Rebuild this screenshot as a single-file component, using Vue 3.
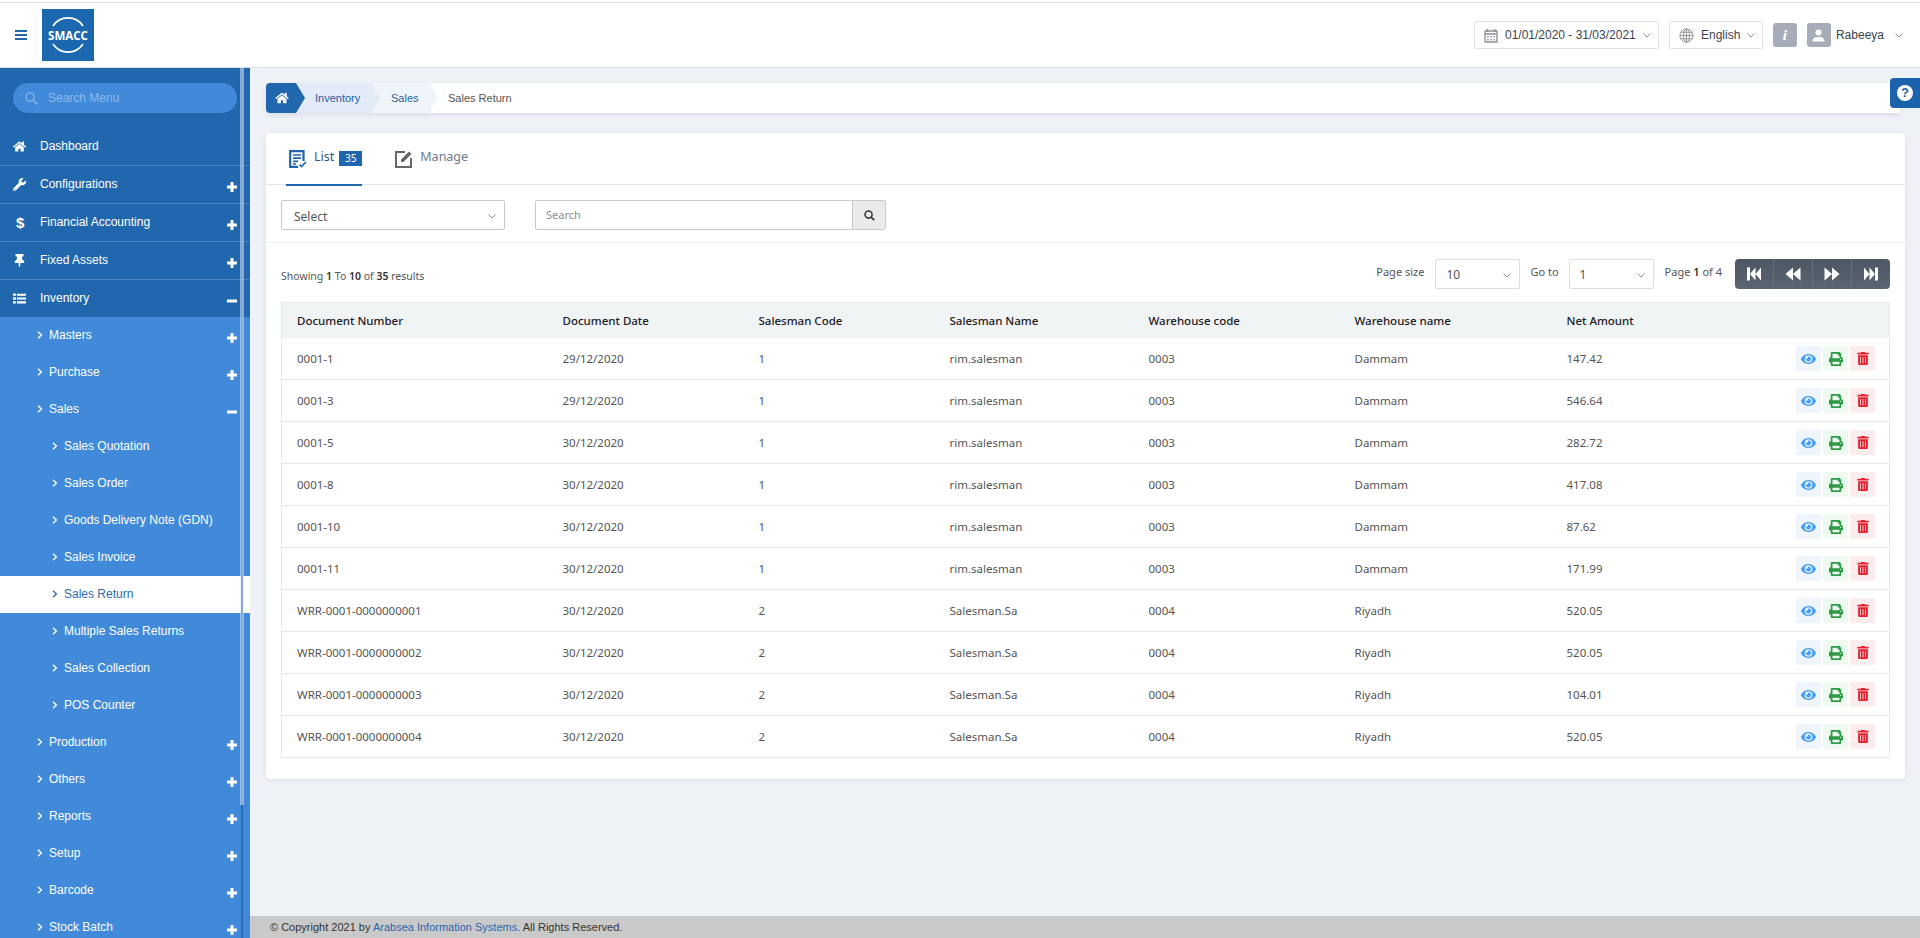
<script setup>
const icons = {
  home: { vb: '0 0 576 512', d: 'M280.37 148.26L96 300.11V464a16 16 0 0 0 16 16l112.06-.29a16 16 0 0 0 15.92-16V368a16 16 0 0 1 16-16h64a16 16 0 0 1 16 16v95.64a16 16 0 0 0 16 16.05L464 480a16 16 0 0 0 16-16V300L295.67 148.26a12.19 12.19 0 0 0-15.3 0zM571.6 251.47L488 182.56V44.05a12 12 0 0 0-12-12h-56a12 12 0 0 0-12 12v72.61L318.47 43a48 48 0 0 0-61 0L4.34 251.47a12 12 0 0 0-1.6 16.9l25.5 31A12 12 0 0 0 45.15 301l235.22-193.74a12.19 12.19 0 0 1 15.3 0L530.9 301a12 12 0 0 0 16.9-1.6l25.5-31a12 12 0 0 0-1.7-16.93z' },
  wrench: { vb: '0 0 512 512', d: 'M507.73 109.1c-2.24-9.03-13.54-12.09-20.12-5.51l-74.36 74.36-67.88-11.31-11.31-67.88 74.36-74.36c6.62-6.62 3.43-17.9-5.66-20.16-47.38-11.74-99.55.91-136.58 37.93-39.64 39.64-50.55 97.1-34.05 147.2L18.74 402.76c-24.99 24.99-24.99 65.51 0 90.5 24.99 24.99 65.51 24.99 90.5 0l213.21-213.21c50.12 16.71 107.47 5.68 147.37-34.22 37.07-37.07 49.7-89.32 37.91-136.73zM64 472c-13.25 0-24-10.75-24-24 0-13.26 10.75-24 24-24s24 10.74 24 24c0 13.25-10.75 24-24 24z' },
  pin: { vb: '0 0 384 512', d: 'M298.028 214.267L285.793 96H328c13.255 0 24-10.745 24-24V24c0-13.255-10.745-24-24-24H56C42.745 0 32 10.745 32 24v48c0 13.255 10.745 24 24 24h42.207L85.972 214.267C37.465 236.82 0 277.261 0 328c0 13.255 10.745 24 24 24h136v104.007c0 1.242.289 2.467.845 3.578l24 48c2.941 5.882 11.364 5.893 14.311 0l24-48a8.008 8.008 0 0 0 .845-3.578V352h136c13.255 0 24-10.745 24-24-.001-51.183-37.983-91.42-85.973-113.733z' },
  list: { vb: '0 0 512 512', d: 'M0 56h112v96H0zM152 64h360v80H152zM0 208h112v96H0zM152 216h360v80H152zM0 360h112v96H0zM152 368h360v80H152z' },
  eye: { vb: '0 0 576 512', d: 'M572.52 241.4C518.29 135.59 410.93 64 288 64S57.68 135.64 3.48 241.41a32.35 32.35 0 0 0 0 29.19C57.71 376.41 165.07 448 288 448s230.32-71.64 284.52-177.41a32.35 32.35 0 0 0 0-29.19zM288 400a144 144 0 1 1 144-144 143.93 143.93 0 0 1-144 144zm0-240a95.31 95.31 0 0 0-25.31 3.79 47.85 47.85 0 0 1-66.9 66.9A95.78 95.78 0 1 0 288 160z' },
  print: { vb: '0 0 512 512', d: 'M448 192V77.25c0-8.49-3.37-16.62-9.37-22.63L393.37 9.37c-6-6-14.14-9.37-22.63-9.37H96C78.33 0 64 14.33 64 32v160c-35.35 0-64 28.65-64 64v112c0 8.84 7.16 16 16 16h48v96c0 17.67 14.33 32 32 32h320c17.67 0 32-14.33 32-32v-96h48c8.84 0 16-7.16 16-16V256c0-35.35-28.65-64-64-64zm-64 256H128v-96h256v96zm0-224H128V64h192v48c0 8.84 7.16 16 16 16h48v96zm48 72c-13.25 0-24-10.75-24-24 0-13.26 10.75-24 24-24s24 10.74 24 24c0 13.25-10.75 24-24 24z' },
  trash: { vb: '0 0 448 512', d: 'M32 464a48 48 0 0 0 48 48h288a48 48 0 0 0 48-48V128H32zm272-256a16 16 0 0 1 32 0v224a16 16 0 0 1-32 0zm-96 0a16 16 0 0 1 32 0v224a16 16 0 0 1-32 0zm-96 0a16 16 0 0 1 32 0v224a16 16 0 0 1-32 0zM432 32H312l-9.4-18.7A24 24 0 0 0 281.1 0H166.8a23.72 23.72 0 0 0-21.4 13.3L136 32H16A16 16 0 0 0 0 48v32a16 16 0 0 0 16 16h416a16 16 0 0 0 16-16V48a16 16 0 0 0-16-16z' },
}

const topMenu = [
  { label: 'Dashboard', icon: 'home' },
  { label: 'Configurations', icon: 'wrench', sign: '+' },
  { label: 'Financial Accounting', glyph: '$', sign: '+' },
  { label: 'Fixed Assets', icon: 'pin', sign: '+' },
  { label: 'Inventory', icon: 'list', sign: '-' },
]
const subMenu = [
  { label: 'Masters', level: 1, sign: '+' },
  { label: 'Purchase', level: 1, sign: '+' },
  { label: 'Sales', level: 1, sign: '-' },
  { label: 'Sales Quotation', level: 2 },
  { label: 'Sales Order', level: 2 },
  { label: 'Goods Delivery Note (GDN)', level: 2 },
  { label: 'Sales Invoice', level: 2 },
  { label: 'Sales Return', level: 2, active: true },
  { label: 'Multiple Sales Returns', level: 2 },
  { label: 'Sales Collection', level: 2 },
  { label: 'POS Counter', level: 2 },
  { label: 'Production', level: 1, sign: '+' },
  { label: 'Others', level: 1, sign: '+' },
  { label: 'Reports', level: 1, sign: '+' },
  { label: 'Setup', level: 1, sign: '+' },
  { label: 'Barcode', level: 1, sign: '+' },
  { label: 'Stock Batch', level: 1, sign: '+' },
]
const columns = ['Document Number', 'Document Date', 'Salesman Code', 'Salesman Name', 'Warehouse code', 'Warehouse name', 'Net Amount']
const dam = ['1', 'rim.salesman', '0003', 'Dammam']
const riy = ['2', 'Salesman.Sa', '0004', 'Riyadh']
const rows = [
  ['0001-1', '29/12/2020', ...dam, '147.42'],
  ['0001-3', '29/12/2020', ...dam, '546.64'],
  ['0001-5', '30/12/2020', ...dam, '282.72'],
  ['0001-8', '30/12/2020', ...dam, '417.08'],
  ['0001-10', '30/12/2020', ...dam, '87.62'],
  ['0001-11', '30/12/2020', ...dam, '171.99'],
  ['WRR-0001-0000000001', '30/12/2020', ...riy, '520.05'],
  ['WRR-0001-0000000002', '30/12/2020', ...riy, '520.05'],
  ['WRR-0001-0000000003', '30/12/2020', ...riy, '104.01'],
  ['WRR-0001-0000000004', '30/12/2020', ...riy, '520.05'],
]
const pager = [
  'M2 2.500h3v13H2zM5 9l5.500-6.500v13zM10.500 9l5.500-6.500v13z',
  'M1.500 9l7.500-6.500v13zM9 9l7.500-6.500v13z',
  'M1.500 2.500L9 9l-7.500 6.500zM9 2.500L16.500 9 9 15.500z',
  'M2 2.500L7.500 9 2 15.500zM7.500 2.500L13 9l-5.500 6.500zM13 2.500h3v13h-3z',
]
</script>

<template>
  <div class="page">
    <header class="topbar">
      <div class="brand">
        <svg class="burger" viewBox="0 0 12 10" width="12" height="10"><path d="M0 0h12v2H0zM0 4h12v2H0zM0 8h12v2H0z" fill="#1f66ae" /></svg>
        <div class="logo">
          <svg viewBox="0 0 52 52" width="52" height="52" class="logo-arcs">
            <path d="M11 17A18 18 0 0 1 41 17M11 35A18 18 0 0 0 41 35" fill="none" stroke="#fff" stroke-width="1.700" />
          </svg>
          <span>SMACC</span>
        </div>
      </div>
      <div class="tools">
        <div class="tool date">
          <svg class="fixed" viewBox="0 0 14 15" width="14" height="15"><path d="M1 3h12v11H1zM1 6h12" fill="none" stroke="#8b8f96" stroke-width="1.300" /><path d="M3.500 1v3M10.500 1v3" stroke="#8b8f96" stroke-width="1.500" /><path d="M3 8h2v1.500H3zM6 8h2v1.500H6zM9 8h2v1.500H9zM3 11h2v1.500H3zM6 11h2v1.500H6zM9 11h2v1.500H9z" fill="#a5a9af" /></svg>
          <span class="nowrap">01/01/2020 - 31/03/2021</span>
          <svg class="chev" viewBox="0 0 8 5" width="8" height="5"><path d="M.5.5L4 4 7.500.5" fill="none" stroke="#8b8f96" /></svg>
        </div>
        <div class="tool lang">
          <svg class="fixed" viewBox="0 0 16 16" width="15" height="15"><g fill="none" stroke="#8f9399" stroke-width="1"><circle cx="8" cy="8" r="7" /><ellipse cx="8" cy="8" rx="3.200" ry="7" /><path d="M8 1v14M1 8h14M2 4.500h12M2 11.500h12" /></g></svg>
          <span>English</span>
          <svg class="chev" viewBox="0 0 8 5" width="8" height="5"><path d="M.5.5L4 4 7.500.5" fill="none" stroke="#8b8f96" /></svg>
        </div>
        <div class="square info">i</div>
        <div class="square">
          <svg viewBox="0 0 14 14" width="13" height="13"><circle cx="7" cy="3.800" r="3.300" fill="#fff" /><path d="M0.500 13.500c0-3.800 2.500-5 6.500-5s6.500 1.200 6.500 5z" fill="#fff" /></svg>
        </div>
        <span class="username">Rabeeya</span>
        <svg class="chev user-chev" viewBox="0 0 8 5" width="8" height="5"><path d="M.5.5L4 4 7.500.5" fill="none" stroke="#8b8f96" /></svg>
      </div>
    </header>

    <div class="body">
      <aside class="sidebar">
        <div class="search-wrap">
          <div class="menu-search">
            <svg viewBox="0 0 14 14" width="13" height="13"><circle cx="5.500" cy="5.500" r="4.500" fill="none" stroke="#8db9ea" stroke-width="1.300" /><path d="M9 9l4.500 4.500" stroke="#8db9ea" stroke-width="1.500" /></svg>
            <span>Search Menu</span>
          </div>
        </div>
        <ul class="top-menu">
          <li v-for="item in topMenu" :key="item.label" class="top-item">
            <span class="top-icon">
              <svg v-if="item.icon" :viewBox="icons[item.icon].vb" width="13" height="13"><path :d="icons[item.icon].d" fill="#fff" /></svg>
              <b v-else>{{ item.glyph }}</b>
            </span>
            <span>{{ item.label }}</span>
            <svg v-if="item.sign" class="sign" viewBox="0 0 10 10" width="10" height="10">
              <path :d="item.sign === '+' ? 'M3.500 0h3v3.500H10v3H6.500V10h-3V6.500H0v-3h3.500z' : 'M0 3.500h10v3H0z'" fill="#fff" />
            </svg>
          </li>
        </ul>
        <ul class="sub-menu">
          <li v-for="item in subMenu" :key="item.label" class="sub-item" :class="['lvl' + item.level, { active: item.active }]">
            <svg class="caret" viewBox="0 0 6 8" width="6" height="8"><path d="M1 .8L4.400 4 1 7.200" fill="none" stroke="currentColor" stroke-width="1.300" /></svg>
            <span>{{ item.label }}</span>
            <svg v-if="item.sign" class="sign" viewBox="0 0 10 10" width="10" height="10">
              <path :d="item.sign === '+' ? 'M3.500 0h3v3.500H10v3H6.500V10h-3V6.500H0v-3h3.500z' : 'M0 3.500h10v3H0z'" fill="#fff" />
            </svg>
          </li>
        </ul>
        <div class="track"></div>
        <div class="thumb"></div>
      </aside>

      <main class="main">
        <div class="content">
          <nav class="crumbs">
            <div class="crumb c0"><svg :viewBox="icons.home.vb" width="14" height="12"><path :d="icons.home.d" fill="#fff" /></svg></div>
            <div class="crumb c1">Inventory</div>
            <div class="crumb c2">Sales</div>
            <div class="crumb c3">Sales Return</div>
          </nav>

          <section class="card">
            <div class="tabs">
              <div class="tab on">
                <svg viewBox="0 0 18 18" width="18" height="18">
                  <path d="M14.500 11V1.200H1.200v15.600h8" fill="none" stroke="#1f66ae" stroke-width="2.200" />
                  <path d="M4 5h8M4 8.200h8M4 11.400h5M4 14h3" stroke="#1f66ae" stroke-width="1.700" />
                  <path d="M10.500 14.500l2 2 4.500-4.500" fill="none" stroke="#1f66ae" stroke-width="1.700" />
                </svg>
                <span>List</span>
                <em>35</em>
              </div>
              <div class="tab">
                <svg viewBox="0 0 18 18" width="18" height="18">
                  <path d="M10 2H1v15h15V8" fill="none" stroke="#666" stroke-width="2" />
                  <path d="M6 9.500L14 1.500l2.500 2.500-8 8H6z" fill="#666" />
                </svg>
                <span>Manage</span>
              </div>
            </div>

            <div class="filters">
              <div class="select wide"><span>Select</span><svg class="chev" viewBox="0 0 8 5" width="8" height="5"><path d="M.5.5L4 4 7.500.5" fill="none" stroke="#8b8f96" /></svg></div>
              <div class="search-group">
                <div class="search-input">Search</div>
                <div class="search-btn"><svg viewBox="0 0 14 14" width="11" height="11"><circle cx="5.800" cy="5.800" r="4.500" fill="none" stroke="#333" stroke-width="2" /><path d="M9 9l4 4" stroke="#333" stroke-width="2.200" /></svg></div>
              </div>
            </div>

            <div class="list-body">
              <div class="list-tools">
                <div class="showing">Showing <b>1</b> To <b>10</b> of <b>35</b> results</div>
                <div class="paging">
                  <span>Page size</span>
                  <div class="select small"><span>10</span><svg class="chev" viewBox="0 0 8 5" width="8" height="5"><path d="M.5.5L4 4 7.500.5" fill="none" stroke="#8b8f96" /></svg></div>
                  <span class="goto">Go to</span>
                  <div class="select small"><span>1</span><svg class="chev" viewBox="0 0 8 5" width="8" height="5"><path d="M.5.5L4 4 7.500.5" fill="none" stroke="#8b8f96" /></svg></div>
                  <span class="of">Page <b>1</b> of 4</span>
                  <div class="pager">
                    <div v-for="(d, i) in pager" :key="i" class="pg"><svg viewBox="0 0 18 18" width="18" height="18"><path :d="d" fill="#fff" /></svg></div>
                  </div>
                </div>
              </div>

              <table class="grid">
                <thead>
                  <tr>
                    <th v-for="c in columns" :key="c">{{ c }}</th>
                    <th></th>
                  </tr>
                </thead>
                <tbody>
                  <tr v-for="r in rows" :key="r[0]">
                    <td v-for="(v, i) in r" :key="i">{{ v }}</td>
                    <td class="acts">
                      <div class="act-row">
                        <span class="act view"><svg :viewBox="icons.eye.vb" width="15" height="14"><path :d="icons.eye.d" fill="#4a9df5" /></svg></span>
                        <span class="act prt"><svg :viewBox="icons.print.vb" width="14" height="14"><path :d="icons.print.d" fill="#2e9a47" /></svg></span>
                        <span class="act del"><svg :viewBox="icons.trash.vb" width="12" height="13"><path :d="icons.trash.d" fill="#e6202f" /></svg></span>
                      </div>
                    </td>
                  </tr>
                </tbody>
              </table>
            </div>
          </section>
        </div>
        <footer class="foot">© Copyright 2021 by <a>Arabsea Information Systems.</a> All Rights Reserved.</footer>
        <div class="help"><svg viewBox="0 0 16 16" width="16" height="16"><circle cx="8" cy="8" r="8" fill="#fff" /></svg><b>?</b></div>
      </main>
    </div>
  </div>
</template>

<style>
html, body { margin: 0; height: 100%; overflow: hidden; background: #eef1f6; }
</style>

<style scoped>
.page { width: 1920px; height: 938px; display: flex; flex-direction: column; overflow: hidden; font-family: "Noto Sans", sans-serif; color: #444; }
ul { list-style: none; margin: 0; padding: 0; }
.nowrap { white-space: nowrap; }
.fixed { flex: none; display: block; }
.topbar { height: 68px; box-sizing: border-box; background: #fff; border-bottom: 1px solid #dde0e6; display: flex; justify-content: space-between; align-items: center; padding: 3px 0 0; flex: none; position: relative; }
.topbar::before { content: ""; position: absolute; left: 0; right: 0; top: 2px; height: 1px; background: #dcdfe3; }
.brand { display: flex; align-items: center; gap: 15px; padding-left: 15px; }
.burger { display: block; }
.logo { width: 52px; height: 52px; background: #1b68b1; position: relative; display: flex; align-items: center; justify-content: center; color: #fff; font: 700 11.500px "Open Sans", sans-serif; }
.logo span { position: relative; }
.logo-arcs { position: absolute; left: 0; top: 0; }
.tools { display: flex; align-items: center; font: 12px "Liberation Sans", sans-serif; color: #3c4450; padding-right: 17px; }
.tool { height: 28px; box-sizing: border-box; border: 1px solid #dfe1e5; border-radius: 2px; display: flex; align-items: center; }
.date { width: 185px; padding-left: 9px; gap: 7px; margin-right: 10px; }
.lang { width: 94px; padding-left: 9px; gap: 7px; margin-right: 10px; }
.chev { flex: none; display: block; }
.date .chev, .lang .chev { margin-left: auto; margin-right: 9px; }
.square { width: 24px; height: 24px; border-radius: 3px; background: #a7adb8; display: flex; align-items: center; justify-content: center; }
.info { margin-right: 10px; color: #fff; font: italic 700 15px "Liberation Serif", serif; }
.username { margin-left: 5px; font-size: 12px; }
.user-chev { margin-left: 11px; }

.body { flex: 1; display: flex; min-height: 0; }
.sidebar { width: 250px; flex: none; background: #418ada; position: relative; overflow: hidden; font: 12px "Liberation Sans", sans-serif; color: #fff; display: flex; flex-direction: column; }
.search-wrap { background: #2167ae; padding: 15px 13px 15px; }
.menu-search { height: 30px; width: 224px; border-radius: 15px; background: #418ada; display: flex; align-items: center; padding-left: 12px; box-sizing: border-box; gap: 10px; color: #8db9ea; }
.top-menu { background: #2167ae; }
.top-item { height: 38px; box-sizing: border-box; border-bottom: 1px solid #4d86c2; display: flex; align-items: center; position: relative; padding-left: 13px; padding-bottom: 1px; }
.top-item:last-child { border-bottom: 0; height: 37px; }
.top-icon { width: 27px; display: flex; font-size: 15px; box-sizing: border-box; }
.top-icon b { margin-left: 3px; }
.sign { position: absolute; right: 13px; top: 50%; margin-top: -3px; }
.sub-item { height: 37px; box-sizing: border-box; padding-bottom: 2px; display: flex; align-items: center; position: relative; }
.sub-item .caret { flex: none; margin-right: 6px; }
.lvl1 { padding-left: 37px; }
.lvl2 { padding-left: 52px; }
.active { background: #fff; color: #2a6cb0; }
.track { position: absolute; left: 241px; width: 2px; top: 0; bottom: 0; background: #2d6db2; }
.thumb { position: absolute; left: 240px; width: 4px; top: 0; height: 737px; background: rgba(214, 226, 240, .55); }

.main { flex: 1; min-width: 0; background: #eef1f6; display: flex; flex-direction: column; position: relative; }
.content { flex: 1; padding: 15px 14px 0 16px; min-height: 0; }
.crumbs { height: 30px; width: 1634px; background: #fff; border-radius: 4px 0 0 4px; box-shadow: 0 2px 4px rgba(40, 60, 90, .1); display: flex; font: 11px "Liberation Sans", sans-serif; margin-bottom: 20px; }
.crumb { display: flex; align-items: center; height: 30px; box-sizing: border-box; position: relative; }
.crumb::after { content: ""; position: absolute; top: 0; right: -9px; width: 0; height: 0; border-top: 15px solid transparent; border-bottom: 15px solid transparent; border-left-width: 9px; border-left-style: solid; z-index: 1; }
.c0 { width: 30px; background: #2167ae; border-radius: 4px 0 0 4px; padding-left: 9px; }
.c0::after { border-left-color: #2167ae; z-index: 3; }
.c1 { width: 75px; background: #e3ebf8; color: #2a5f9d; padding-left: 19px; }
.c1::after { border-left-color: #e3ebf8; z-index: 2; }
.c2 { width: 58px; background: #f0f4fb; color: #2a5f9d; padding-left: 20px; }
.c2::after { border-left-color: #f0f4fb; }
.c3 { padding-left: 19px; color: #555; }
.c3::after { display: none; }

.card { height: 646px; width: 1639px; background: #fff; border-radius: 4px; box-shadow: 0 1px 4px rgba(40, 60, 90, .08); }
.tabs { height: 52px; box-sizing: border-box; border-bottom: 1px solid #e4e6ea; display: flex; padding-left: 20px; gap: 30px; }
.tab { display: flex; align-items: flex-start; padding: 15px 0 0 3px; font-size: 12.500px; color: #6d7a8c; gap: 7px; height: 53px; box-sizing: border-box; }
.tab svg { margin-top: 2px; }
.tab.on { color: #33587f; border-bottom: 2px solid #1f66ae; }
.tab em { font: normal 10px/15px "Noto Sans", sans-serif; color: #fff; background: #1f66ae; width: 23px; height: 15px; text-align: center; margin: 3px 0 0 -2px; }
.filters { height: 58px; box-sizing: border-box; border-bottom: 1px solid #eceef1; display: flex; align-items: flex-start; padding: 15px 0 0 15px; gap: 30px; }
.select { height: 30px; box-sizing: border-box; border: 1px solid #cfd2d6; border-radius: 2px; background: #fff; display: flex; align-items: center; justify-content: space-between; padding: 2px 8px 0 12px; font-size: 12px; color: #555; }
.select.wide { width: 224px; border-color: #c7c9cc; }
.select.small { width: 85px; border-color: #dcdee2; padding-left: 10px; }
.search-group { display: flex; }
.search-input { width: 318px; height: 30px; box-sizing: border-box; border: 1px solid #c7c9cc; border-radius: 2px 0 0 2px; font-size: 11px; line-height: 28px; padding-left: 10px; color: #8a8f96; }
.search-btn { width: 33px; height: 30px; box-sizing: border-box; background: #e9eaec; border: 1px solid #c7c9cc; border-left: 0; border-radius: 0 2px 2px 0; display: flex; align-items: center; justify-content: center; }
.list-body { padding: 16px 15px 0; }
.list-tools { display: flex; justify-content: space-between; align-items: flex-start; height: 43px; }
.showing { font-size: 10.500px; line-height: 14px; margin-top: 10px; color: #555; }
.showing b, .of b { font-weight: 600; color: #333; }
.paging { display: flex; align-items: flex-start; font-size: 11px; line-height: 26px; color: #555; }
.paging > span { display: block; }
.paging > span:first-child { margin-right: 11px; }
.goto { margin: 0 10px 0 10px; }
.of { margin: 0 13px 0 11px; }
.pager { width: 155px; height: 30px; border-radius: 4px; background: linear-gradient(#4d5763, #5c6671); display: flex; }
.pg { flex: 1; display: flex; align-items: center; justify-content: center; border-right: 1px solid #68717c; }
.pg:last-child { border-right: 0; }
.grid { width: 1609px; border-collapse: collapse; table-layout: fixed; font-size: 11.500px; border: 1px solid #e6e8ea; }
.grid th { height: 35px; padding: 0 0 0 15px; background: #f1f4f5; text-align: left; font-weight: 500; font-size: 11.500px; color: #1c2026; }
.grid td { height: 41px; padding: 0 0 0 15px; border-top: 1px solid #e6e8ea; color: #555; }
.grid tbody tr:first-child td { border-top: 0; height: 41px; }
.grid th:nth-child(1) { width: 266px; box-sizing: border-box; }
.grid th:nth-child(2) { width: 196px; box-sizing: border-box; }
.grid th:nth-child(3) { width: 191px; box-sizing: border-box; }
.grid th:nth-child(4) { width: 199px; box-sizing: border-box; }
.grid th:nth-child(5) { width: 206px; box-sizing: border-box; }
.grid th:nth-child(6) { width: 212px; box-sizing: border-box; }
.grid th:nth-child(7) { width: 190px; box-sizing: border-box; }
.grid .acts { padding: 0 14px 0 0; }
.act-row { display: flex; justify-content: flex-end; gap: 2px; }
.act { width: 25px; height: 25px; border-radius: 2px; display: flex; align-items: center; justify-content: center; }
.view { background: #eef5fd; }
.prt { background: #eefaf0; }
.del { background: #fbeced; }
.foot { height: 22px; flex: none; background: #c9c9c9; padding-left: 20px; font: 11px/22px "Liberation Sans", sans-serif; color: #333; }
.foot a { color: #1f66ae; }
.help { position: absolute; right: 0; top: 10px; width: 30px; height: 30px; background: #1b62ac; border-radius: 4px 0 0 4px; display: flex; align-items: center; justify-content: center; }
.help b { position: absolute; font: 700 13px/16px "Liberation Sans", sans-serif; color: #1b62ac; }
</style>
